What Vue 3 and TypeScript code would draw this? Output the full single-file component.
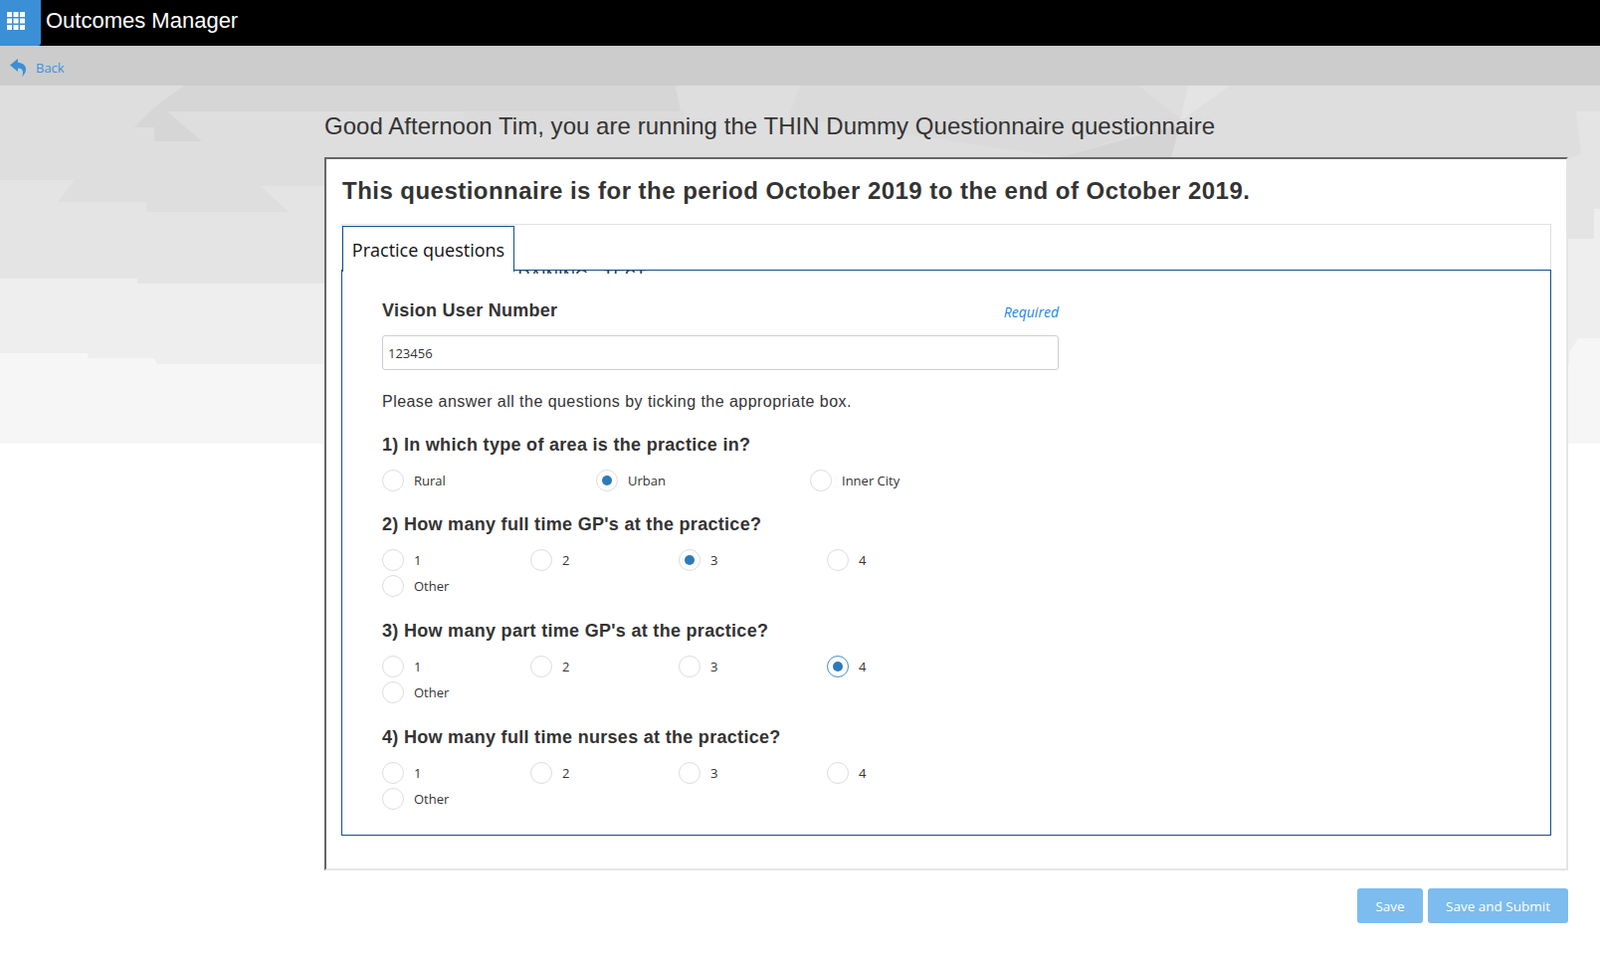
<script setup lang="ts">
interface Question {
  title: string
  options: string[]
  selected: string
  focused?: boolean
  wide?: boolean
}

const questions: Question[] = [
  { title: '1) In which type of area is the practice in?', options: ['Rural', 'Urban', 'Inner City'], selected: 'Urban', wide: true },
  { title: "2) How many full time GP's at the practice?", options: ['1', '2', '3', '4', 'Other'], selected: '3' },
  { title: "3) How many part time GP's at the practice?", options: ['1', '2', '3', '4', 'Other'], selected: '4', focused: true },
  { title: '4) How many full time nurses at the practice?', options: ['1', '2', '3', '4', 'Other'], selected: '' },
]
</script>

<template>
  <div class="page">
    <svg class="backdrop" width="1608" height="964" viewBox="0 0 1608 964" aria-hidden="true">
      <rect x="0" y="86" width="1608" height="360" fill="#f6f6f6" />
      <polygon points="0,86 1608,86 1608,340 1586,340 1577,355 1577,366 158,366 155,360 88,360 88,355 0,355" fill="#eeeeee" />
      <polygon points="0,86 1608,86 1608,210 1602,210 1602,240 1576,240 1576,285 138,285 138,280 0,280" fill="#e4e4e4" />
      <polygon points="0,86 1608,86 1608,112 1584,112 1589,155 1576,160 1576,187 262,187 290,213 147,213 147,203 58,203 75,181 0,181" fill="#dedede" />
      <polygon points="466,112 688,112 688,130 466,130" fill="#dbdbdb" />
      <polygon points="185,86 679,86 684,112 168,112 203,142 155,142 155,128 135,128 155,108" fill="#d6d6d6" />
      <polygon points="793,117 804,86 1144,86 1187,120 1065,158" fill="#dadada" />
      <polygon points="1065,158 1186,125 1177,158" fill="#d4d4d4" />
      <polygon points="1194,86 1236,86 1186,122" fill="#e4e4e4" />
    </svg>

    <header class="topbar">
      <div class="launcher">
        <svg width="18" height="18" viewBox="0 0 18 18" aria-hidden="true">
          <g fill="#fff">
            <rect x="0" y="0" width="5" height="5" /><rect x="6.5" y="0" width="5" height="5" /><rect x="13" y="0" width="5" height="5" />
            <rect x="0" y="6.5" width="5" height="5" /><rect x="6.5" y="6.5" width="5" height="5" /><rect x="13" y="6.5" width="5" height="5" />
            <rect x="0" y="13" width="5" height="5" /><rect x="6.5" y="13" width="5" height="5" /><rect x="13" y="13" width="5" height="5" />
          </g>
        </svg>
      </div>
      <span class="app-name">Outcomes Manager</span>
    </header>

    <nav class="subbar">
      <svg width="16" height="18" viewBox="0 0 16 18" aria-hidden="true">
        <path d="M8 0 L0 6.5 L8 13 L8 9.5 C11 9.5 12.8 11 13 13 C13.2 15 12.8 16.5 12 18 C15 15.8 16 13 16 10.5 C16 6.5 12.5 4 8 4 Z" fill="#3a8fd6" />
      </svg>
      <a class="back">Back</a>
    </nav>

    <main class="main">
      <h1 class="greeting">Good Afternoon Tim, you are running the THIN Dummy Questionnaire questionnaire</h1>

      <section class="card">
        <h2 class="period">This questionnaire is for the period October 2019 to the end of October 2019.</h2>

        <div class="tabs">
          <div class="tab-row">
            <div class="tab">Practice questions</div>
          </div>
          <div class="panel">
            <div class="cut-text"><span>TRAINING - TEST</span></div>
            <div class="label-row">
              <label class="field-label">Vision User Number</label>
              <em class="required">Required</em>
            </div>
            <input class="text-input" type="text" value="123456" readonly />
            <p class="hint">Please answer all the questions by ticking the appropriate box.</p>

            <div v-for="q in questions" :key="q.title" class="question">
              <h3 class="q-title">{{ q.title }}</h3>
              <div class="options" :class="{ wide: q.wide }">
                <div v-for="o in q.options" :key="o" class="option">
                  <span class="radio" :class="{ focused: q.focused && o === q.selected }">
                    <span v-if="o === q.selected" class="dot"></span>
                  </span>
                  <span class="opt-label">{{ o }}</span>
                </div>
              </div>
            </div>
          </div>
        </div>
      </section>

      <div class="actions">
        <button class="btn save" type="button">Save</button>
        <button class="btn submit" type="button">Save and Submit</button>
      </div>
    </main>
  </div>
</template>

<style>
html, body { margin: 0; background: #fff; }
</style>

<style scoped>
.page {
  position: relative;
  width: 1608px;
  height: 964px;
  overflow: hidden;
  background: #fff;
  font-family: "Open Sans", "Liberation Sans", sans-serif;
  color: #333;
}
.backdrop { position: absolute; left: 0; top: 0; }
.topbar {
  position: relative;
  height: 46px;
  background: #000;
  display: flex;
  align-items: flex-start;
}
.launcher {
  width: 41px;
  height: 46px;
  background: #3a8fd6;
  border-bottom-right-radius: 3px;
  display: flex;
  align-items: center;
  justify-content: flex-start;
  box-sizing: border-box;
  padding: 0 0 4px 7px;
}
.app-name {
  margin-left: 5px;
  font-family: "Liberation Sans", Arial, sans-serif;
  font-size: 22px;
  line-height: 41px;
  color: #fff;
}
.subbar {
  position: relative;
  box-sizing: border-box;
  height: 40px;
  background: #cccccc;
  display: flex;
  align-items: center;
  padding: 4px 0 0 10px;
}
.back { margin-left: 10px; font-size: 13px; color: #3a93dd; }
.main {
  position: relative;
  padding-left: 326px;
  width: 1250px;
}
.greeting {
  margin: 0;
  height: 72px;
  font-family: "Liberation Sans", Arial, sans-serif;
  font-size: 24px;
  font-weight: 400;
  line-height: 82px;
  letter-spacing: 0.04px;
  color: #333;
  white-space: nowrap;
}
.card {
  box-sizing: border-box;
  height: 717px;
  background: #fff;
  border: 2px solid;
  border-color: #666 #e5e5e5 #e5e5e5 #666;
  padding: 0 15px;
}
.period {
  margin: 0;
  height: 65px;
  padding-left: 1px;
  font-family: "Liberation Sans", Arial, sans-serif;
  font-size: 24px;
  font-weight: 700;
  line-height: 64px;
  letter-spacing: 0.47px;
  color: #333;
  white-space: nowrap;
}
.tab-row {
  box-sizing: border-box;
  height: 47px;
  border: 1px solid #e0e0e0;
  border-bottom: 0;
  padding: 1px 0 0 1px;
  display: flex;
  align-items: flex-start;
}
.tab {
  position: relative;
  z-index: 2;
  box-sizing: border-box;
  height: 46px;
  width: 173px;
  margin-left: -1px;
  background: #fff;
  border: 1px solid #0f4f91;
  border-bottom: 0;
  font-size: 18px;
  line-height: 47px;
  text-align: center;
  color: #111;
  white-space: nowrap;
}
.tab::after {
  content: "";
  position: absolute;
  left: 0;
  right: 0;
  bottom: -4px;
  height: 4px;
  background: #fff;
}
.panel {
  position: relative;
  box-sizing: border-box;
  height: 569px;
  margin-top: -1px;
  border: 1px solid #0f4f91;
  padding: 28px 40px 0 40px;
}
.cut-text {
  position: absolute;
  left: 166px;
  top: 0;
  width: 160px;
  height: 3px;
  overflow: hidden;
}
.cut-text span {
  position: absolute;
  left: 0;
  top: -4px;
  font-family: "Liberation Sans", Arial, sans-serif;
  font-size: 17px;
  line-height: 20px;
  color: #333;
  white-space: nowrap;
}
.label-row {
  width: 680px;
  height: 37px;
  display: flex;
  justify-content: space-between;
  align-items: flex-start;
}
.field-label {
  font-family: "Liberation Sans", Arial, sans-serif;
  font-size: 18px;
  font-weight: 700;
  line-height: 24px;
  letter-spacing: 0.25px;
  color: #333;
}
.required {
  font-size: 14px;
  line-height: 28px;
  color: #1a86e8;
}
.text-input {
  display: block;
  box-sizing: border-box;
  width: 680px;
  height: 35px;
  padding: 0 5px;
  border: 1px solid #ccccd6;
  border-radius: 3px;
  background: #fff;
  font-family: "Open Sans", sans-serif;
  font-size: 13px;
  color: #333;
  outline: none;
}
.hint {
  margin: 21px 0 0;
  height: 23px;
  font-family: "Liberation Sans", Arial, sans-serif;
  font-size: 16px;
  line-height: 22px;
  letter-spacing: 0.46px;
  color: #333;
}
.question { margin-top: 20px; }
.hint + .question,
.hint + .question + .question { margin-top: 19px; }
.q-title {
  margin: 0 0 11px;
  font-family: "Liberation Sans", Arial, sans-serif;
  font-size: 18px;
  font-weight: 700;
  line-height: 24px;
  letter-spacing: 0.3px;
  color: #333;
}
.options {
  display: grid;
  grid-template-columns: repeat(4, 149px);
  grid-auto-rows: 26px;
}
.options.wide { grid-template-columns: repeat(3, 215px); }
.option { display: flex; align-items: center; }
.radio {
  box-sizing: border-box;
  width: 22px;
  height: 22px;
  border: 1px solid #dddddd;
  border-radius: 50%;
  background: #fff;
  display: flex;
  align-items: center;
  justify-content: center;
}
.radio.focused { border-color: #3f8fcf; }
.dot { width: 10px; height: 10px; border-radius: 50%; background: #2d7ab9; }
.opt-label { margin-left: 10px; font-size: 13px; color: #333; }
.actions {
  display: flex;
  justify-content: flex-end;
  gap: 5px;
  margin-top: 18px;
}
.btn {
  height: 35px;
  padding: 0;
  border: 0;
  border-radius: 3px;
  background: #7cbcee;
  color: #fff;
  font-family: "Open Sans", sans-serif;
  font-size: 13.5px;
}
.save { width: 66px; }
.submit { width: 141px; }
</style>
